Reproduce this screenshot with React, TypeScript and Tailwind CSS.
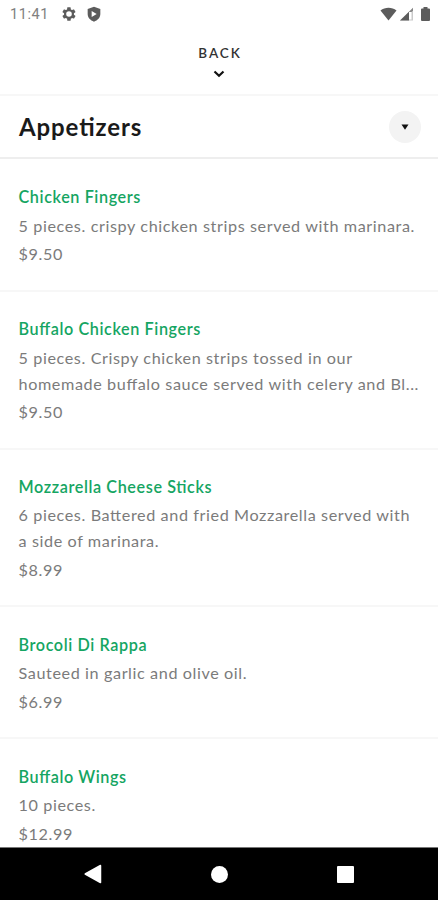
import { Fragment } from "react";

const items = [
  {
    name: "Chicken Fingers",
    description: ["5 pieces. crispy chicken strips served with marinara."],
    price: "$9.50",
  },
  {
    name: "Buffalo Chicken Fingers",
    description: ["5 pieces. Crispy chicken strips tossed in our", "homemade buffalo sauce served with celery and Bl..."],
    price: "$9.50",
  },
  {
    name: "Mozzarella Cheese Sticks",
    description: ["6 pieces. Battered and fried Mozzarella served with", "a side of marinara."],
    price: "$8.99",
  },
  {
    name: "Brocoli Di Rappa",
    description: ["Sauteed in garlic and olive oil."],
    price: "$6.99",
  },
  {
    name: "Buffalo Wings",
    description: ["10 pieces."],
    price: "$12.99",
  },
];

function StatusBar() {
  return (
    <div className="flex h-7 shrink-0 items-center justify-between pl-2.5 pr-2 text-[#5c5c5c]">
      <div className="flex items-center">
        <span className="w-[50px] pt-px font-['Roboto',sans-serif] text-[14.5px] leading-7 tracking-[0.6px] text-[#808080]">11:41</span>
        <svg className="ml-px h-4 w-4" viewBox="0 0 24 24" fill="currentColor">
          <path
            fillRule="evenodd"
            d="M19.4 13a7.5 7.5 0 0 0 0-2l2.1-1.6c.2-.2.3-.4.1-.7l-2-3.4c-.1-.2-.4-.3-.6-.2l-2.5 1a7.3 7.3 0 0 0-1.7-1L14.4 2.4a.5.5 0 0 0-.5-.4h-4a.5.5 0 0 0-.5.4L9.1 5.1c-.6.2-1.2.6-1.7 1l-2.5-1c-.2-.1-.5 0-.6.2l-2 3.4c-.1.3 0 .5.1.7L4.6 11a7.5 7.5 0 0 0 0 2l-2.2 1.6c-.1.2-.2.4-.1.7l2 3.4c.1.2.4.3.6.2l2.5-1c.5.4 1.1.8 1.7 1l.3 2.7c0 .2.3.4.5.4h4c.3 0 .5-.2.5-.4l.4-2.7c.6-.2 1.2-.6 1.7-1l2.5 1c.2.1.5 0 .6-.2l2-3.4c.2-.3.1-.5-.1-.7L19.4 13ZM12 16.2a4.2 4.2 0 1 1 0-8.4 4.2 4.2 0 0 1 0 8.4Z"
          />
        </svg>
        <svg className="ml-[9px] h-4 w-4" viewBox="0 0 24 24" fill="currentColor">
          <path
            fillRule="evenodd"
            d="M12 1 2.5 4.5V12c0 5.5 4 9.5 9.5 11.5 5.5-2 9.5-6 9.5-11.5V4.500L12 1ZM8.500 7.500l7.500 4.500-7.500 4.500v-9Z"
          />
        </svg>
      </div>
      <div className="flex items-center">
        <svg className="h-[14px] w-[17px]" viewBox="0 0 17 14" fill="currentColor">
          <path d="M.5 3.6C5-.1 12-.1 16.5 3.6L8.5 13.5Z" />
        </svg>
        <svg className="ml-0.5 h-[14px] w-[15px]" viewBox="0 0 15 14">
          <path d="M1 13.5 14 .8v12.7Z" fill="#c9c9c9" />
          <path d="M1 13.5 10 4.7v8.8Z" fill="currentColor" />
          <path d="M9.5 5.2 14 .8v2.7l-1.5 1.5Z" fill="currentColor" opacity=".6" />
          <path d="M10 5h2.5v7.5H10Z" fill="#fff" />
        </svg>
        <svg className="ml-[7px] h-[14px] w-[9px]" viewBox="0 0 9 14" fill="currentColor">
          <path d="M2.5 0h4v1.5H8a1 1 0 0 1 1 1V13a1 1 0 0 1-1 1H1a1 1 0 0 1-1-1V2.5a1 1 0 0 1 1-1h1.5Z" />
        </svg>
      </div>
    </div>
  );
}

function NavigationBar() {
  return (
    <div className="flex h-[53px] shrink-0 items-center justify-around border-t border-[#777] bg-black px-[29px]">
      <svg className="h-5 w-[18px]" viewBox="0 0 18 20">
        <path d="M1.2 10 16.5 1.5v17Z" fill="#fff" stroke="#fff" strokeWidth="1.5" strokeLinejoin="round" />
      </svg>
      <div className="h-[17px] w-[17px] rounded-full bg-white" />
      <div className="h-[17px] w-[17px] rounded-[1px] bg-white" />
    </div>
  );
}

export default function App() {
  return (
    <div className="flex h-[900px] w-[438px] flex-col overflow-hidden bg-white font-['Lato',sans-serif] [font-feature-settings:'liga'_1]">
      <StatusBar />
      <button className="flex h-[68px] shrink-0 flex-col items-center border-b-2 border-[#f7f7f7] pt-[15px] text-[#333]">
        <span className="pl-[2px] text-[13.5px] font-semibold leading-5 tracking-[1.9px]">BACK</span>
        <svg className="mt-[6.5px] h-[8px] w-[12px]" viewBox="0 0 12 8" fill="none">
          <path d="m1.5 1.5 4.5 4.2 4.5-4.2" stroke="#111" strokeWidth="2.2" />
        </svg>
      </button>
      <div className="flex h-[63px] shrink-0 items-center justify-between border-b-2 border-[#eee] pl-[19px] pr-[17px]">
        <h1 className="text-[24px] font-bold leading-8 tracking-[0.9px] text-[#1a1a1a]">Appetizers</h1>
        <button className="flex h-8 w-8 items-center justify-center rounded-full bg-[#f3f3f3]">
          <svg className="h-[6px] w-[8px]" viewBox="0 0 8 6">
            <path d="M.5.5h7L4 5.7Z" fill="#111" />
          </svg>
        </button>
      </div>
      <ul className="mt-px min-h-0 flex-1 overflow-hidden">
        {items.map((item) => (
          <li
            key={item.name}
            className="whitespace-nowrap border-b-2 border-[#f7f7f7] pb-[22.4px] pl-[18.5px] pt-[24.4px] text-[16.2px] leading-[26px] tracking-[0.6px] text-[#7b7b7b]"
          >
            <h2 className="font-semibold text-[#15a562]">{item.name}</h2>
            <p className="mt-[2.5px]">
              {item.description.map((line, i) => (
                <Fragment key={line}>
                  {i > 0 && <br />}
                  {line}
                </Fragment>
              ))}
            </p>
            <p className="mt-[2.5px]">{item.price}</p>
          </li>
        ))}
      </ul>
      <NavigationBar />
    </div>
  );
}
